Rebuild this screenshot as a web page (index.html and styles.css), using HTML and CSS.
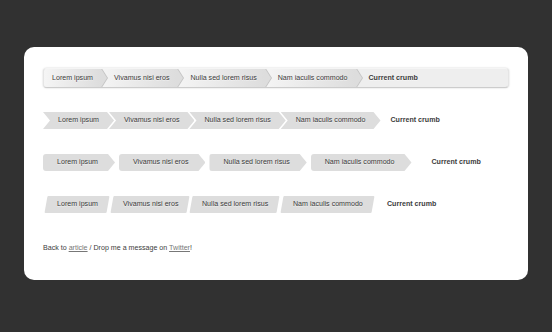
FILE: index.html
```html
<!DOCTYPE html>
<html lang="en">
<head>
    <meta charset="UTF-8">
    <meta name="viewport" content="width=device-width, initial-scale=1.0">
    <title>CSS3 breadcrumbs</title>
    <link rel="stylesheet" href="styles.css">
</head>
<body>
    <div class="card">
        <ul class="crumbs crumbs-bar">
            <li><a href="#">Lorem ipsum</a></li>
            <li><a href="#">Vivamus nisi eros</a></li>
            <li><a href="#">Nulla sed lorem risus</a></li>
            <li><a href="#">Nam iaculis commodo</a></li>
            <li><a href="#" class="current">Current crumb</a></li>
        </ul>

        <ul class="crumbs crumbs-arrow">
            <li><a href="#">Lorem ipsum</a></li>
            <li><a href="#">Vivamus nisi eros</a></li>
            <li><a href="#">Nulla sed lorem risus</a></li>
            <li><a href="#">Nam iaculis commodo</a></li>
            <li><a href="#" class="current">Current crumb</a></li>
        </ul>

        <ul class="crumbs crumbs-tab">
            <li><a href="#">Lorem ipsum</a></li>
            <li><a href="#">Vivamus nisi eros</a></li>
            <li><a href="#">Nulla sed lorem risus</a></li>
            <li><a href="#">Nam iaculis commodo</a></li>
            <li><a href="#" class="current">Current crumb</a></li>
        </ul>

        <ul class="crumbs crumbs-skew">
            <li><a href="#"><span>Lorem ipsum</span></a></li>
            <li><a href="#"><span>Vivamus nisi eros</span></a></li>
            <li><a href="#"><span>Nulla sed lorem risus</span></a></li>
            <li><a href="#"><span>Nam iaculis commodo</span></a></li>
            <li><a href="#" class="current"><span>Current crumb</span></a></li>
        </ul>

        <p class="note">Back to <a href="#">article</a> / Drop me a message on <a href="#">Twitter</a>!</p>
    </div>
</body>
</html>
```

FILE: styles.css
```css
body {
    margin: 0;
    padding: 47px 24px;
    background: #313131;
    font-family: "Liberation Sans", Arial, sans-serif;
    font-size: 7.1px;
    color: #3c3c3c;
}
.card {
    background: #fff;
    border-radius: 10px;
    padding: 21px 19px 27px;
}
.crumbs {
    list-style: none;
    margin: 0 0 25px;
    padding: 0;
    display: flex;
}
.crumbs a {
    display: block;
    color: #3c3c3c;
    text-decoration: none;
    text-shadow: 0 1px 0 rgba(255, 255, 255, .5);
    white-space: nowrap;
}
.crumbs .current {
    font-weight: bold;
}

/* bar with gradient items */
.crumbs-bar {
    margin-bottom: 24px;
    background: #eee;
    border: 1px solid;
    border-color: #f5f5f5 #e5e5e5 #ccc;
    border-radius: 4px;
    box-shadow: 0 0 2px rgba(0, 0, 0, .2);
    overflow: hidden;
}
.crumbs-bar a {
    position: relative;
    line-height: 18px;
    padding: 0 7px 0 14px;
    background: linear-gradient(to right, #f5f5f5, #ddd);
}
.crumbs-bar li:first-child a {
    padding-left: 8px;
}
.crumbs-bar a::before,
.crumbs-bar a::after {
    content: "";
    position: absolute;
    top: 50%;
    margin-top: -11px;
    border-top: 11px solid transparent;
    border-bottom: 11px solid transparent;
    border-left: 7px solid;
    right: -7px;
}
.crumbs-bar a::after {
    z-index: 2;
    border-left-color: #ddd;
}
.crumbs-bar a::before {
    z-index: 1;
    right: -8px;
    border-left-color: #c4c4c4;
}
.crumbs-bar .current {
    background: none;
}
.crumbs-bar .current::before,
.crumbs-bar .current::after {
    display: none;
}

/* notched arrows */
.crumbs-arrow li + li {
    margin-left: -5px;
}
.crumbs-arrow a {
    line-height: 17px;
    padding: 0 15px;
    background: #ddd;
    clip-path: polygon(0 0, calc(100% - 7px) 0, 100% 50%, calc(100% - 7px) 100%, 0 100%, 7px 50%);
}
.crumbs-arrow .current {
    background: none;
    clip-path: none;
}

/* rounded tabs with a point */
.crumbs-tab li + li {
    margin-left: 4px;
}
.crumbs-tab a {
    line-height: 17px;
    padding: 0 17px 0 14px;
    background: #ddd;
    border-radius: 3px 0 0 3px;
    clip-path: polygon(0 0, calc(100% - 7px) 0, 100% 50%, calc(100% - 7px) 100%, 0 100%);
}
.crumbs-tab .current {
    padding-left: 16px;
    background: none;
    clip-path: none;
}

/* skewed */
.crumbs-skew {
    margin-bottom: 30px;
    padding-left: 3px;
    gap: 3.5px;
}
.crumbs-skew a {
    line-height: 17px;
    padding: 0 10.5px;
    background: #ddd;
    border-radius: 1px;
    transform: skewX(-10deg);
}
.crumbs-skew a span {
    display: inline-block;
    transform: skewX(10deg);
}
.crumbs-skew .current {
    padding-left: 10px;
    background: none;
}

.note {
    margin: 0;
    line-height: 10px;
}
.note a {
    color: #777;
}
```
